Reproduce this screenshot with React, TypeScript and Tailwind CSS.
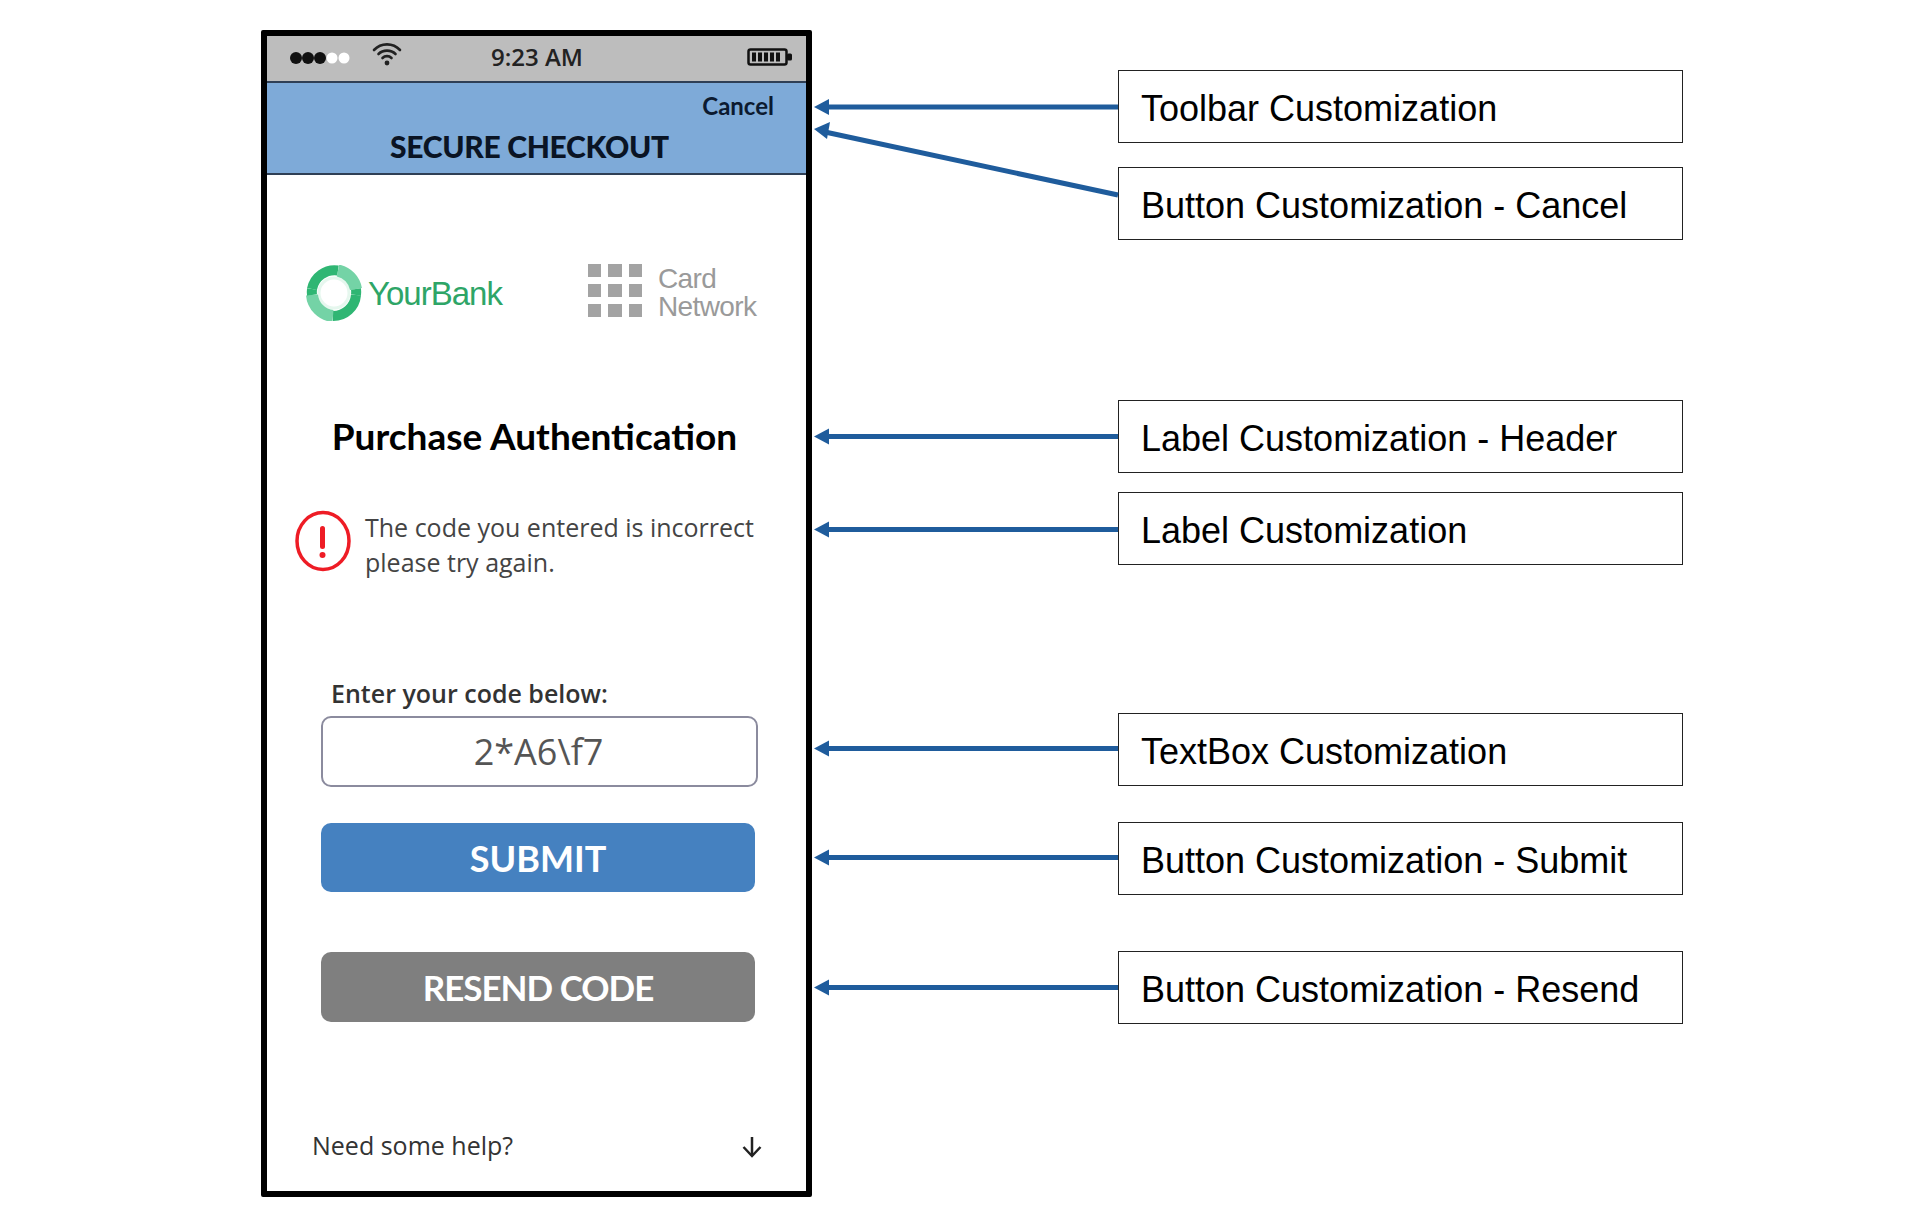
import React from "react";

const ui = "font-['Open_Sans','Noto_Sans',sans-serif]";
const lato = "font-['Lato','Open_Sans',sans-serif]";

function Callout({ label, className }: { label: string; className: string }) {
  return (
    <div className={`flex h-[73px] w-[565px] items-center border border-[#222] pl-[22px] pt-[5px] text-[36px] leading-none text-black font-['Liberation_Sans',sans-serif] ${className}`}>
      {label}
    </div>
  );
}

function Arrows() {
  const ys = [107, 436.5, 529.5, 748.5, 857.5, 987.5];
  return (
    <svg className="absolute left-0 top-0" width="1920" height="1227" fill="#1f5c9c">
      {ys.map((y) => (
        <g key={y}>
          <rect x="822" y={y - 2.5} width="296" height="5" />
          <polygon points={`814,${y} 829,${y - 8} 829,${y + 8}`} />
        </g>
      ))}
      <line x1="1118" y1="195" x2="825" y2="132" stroke="#1f5c9c" strokeWidth="5" />
      <polygon points="814,129 830,122 827,139" />
    </svg>
  );
}

function Signal() {
  return (
    <svg width="62" height="16" viewBox="0 0 62 16">
      {[8, 20, 32].map((x) => <circle key={x} cx={x} cy="8" r="6" fill="#111" />)}
      {[44, 56].map((x) => <circle key={x} cx={x} cy="8" r="5.5" fill="#fff" />)}
    </svg>
  );
}

function Wifi() {
  return (
    <svg width="30" height="26" viewBox="0 0 30 26" fill="none" stroke="#222" strokeWidth="2.6" strokeLinecap="round">
      <path d="M2 9 C9 1.5 21 1.5 28 9" />
      <path d="M6.5 13 C11 8.5 19 8.5 23.5 13" />
      <path d="M10.5 17 C13 14.5 17 14.5 19.5 17" />
      <circle cx="15" cy="22" r="2.4" fill="#222" stroke="none" />
    </svg>
  );
}

function Battery() {
  return (
    <svg width="46" height="18" viewBox="0 0 46 18">
      <rect x="1.5" y="1.5" width="38" height="15" rx="2" fill="none" stroke="#111" strokeWidth="2.5" />
      <rect x="40" y="5.5" width="5" height="7" rx="1.5" fill="#111" />
      {[5, 11, 17, 23, 29].map((x) => <rect key={x} x={x} y="4.5" width="4" height="9" fill="#111" />)}
    </svg>
  );
}

function BankLogo() {
  return (
    <svg width="56" height="56" viewBox="0 0 56 56" fill="none">
      <circle cx="28" cy="28" r="15" stroke="#e6f7ee" strokeWidth="3" />
      <g strokeWidth="10">
        <path d="M6 24 A23 23 0 0 1 32 5.5" stroke="#2fb673" />
        <path d="M32 5.5 A23 23 0 0 1 50 24" stroke="#74d3a6" strokeWidth="12" />
        <path d="M50 30 A23 23 0 0 1 27 51" stroke="#2fb673" />
        <path d="M27 51 A23 23 0 0 1 6 30" stroke="#74d3a6" strokeWidth="12" />
        <path d="M50 24 A23 23 0 0 1 50 30" stroke="#2fb673" />
        <path d="M6 30 A23 23 0 0 1 6 24" stroke="#2fb673" />
      </g>
    </svg>
  );
}

function CardGrid() {
  return (
    <div className="grid w-[54px] grid-cols-3 gap-[7px]">
      {Array.from({ length: 9 }).map((_, i) => (
        <div key={i} className="h-[13px] bg-[#a3a3a3]" />
      ))}
    </div>
  );
}

function ErrorIcon() {
  return (
    <svg width="56" height="62" viewBox="0 0 56 62" fill="none">
      <ellipse cx="28" cy="31" rx="26" ry="28.5" stroke="#ee1c25" strokeWidth="3.5" />
      <rect x="25" y="16" width="5" height="23" rx="2.5" fill="#ee1c25" />
      <circle cx="27.5" cy="45" r="3" fill="#ee1c25" />
    </svg>
  );
}

function Phone() {
  return (
    <div className={`flex h-[1167px] w-[551px] shrink-0 flex-col rounded-[2px] border-[6px] border-black bg-white ${ui}`}>
      <div className="flex h-[47px] shrink-0 items-center border-b-[2px] border-[#2f3f55] bg-[#bdbdbd] pl-[21px] pr-[13px]">
        <div className="-mt-[2px]"><Signal /></div>
        <div className="ml-[22px] -mt-[10px]"><Wifi /></div>
        <div className="ml-[89px] -mt-[4px] text-[24px] font-semibold leading-none text-[#222]">9:23 AM</div>
        <div className="ml-auto -mt-[3px]"><Battery /></div>
      </div>
      <div className="flex h-[92px] shrink-0 flex-col border-b-[2px] border-[#2f3f55] bg-[#7eaad8]">
        <div className={`mt-[8px] self-end pr-[32px] text-[24px] font-bold leading-[30px] text-[#0c1a30] ${lato}`}>Cancel</div>
        <div className={`mt-[7px] pr-[14px] text-center text-[30px] font-black leading-[36px] tracking-[-0.3px] text-[#0a1424] ${lato}`}>SECURE CHECKOUT</div>
      </div>

      <div className="mt-[90px] flex h-[56px] shrink-0 items-center pl-[39px]">
        <BankLogo />
        <div className="ml-[6px] font-['Liberation_Sans',sans-serif] text-[33px] leading-none tracking-[-1px] text-[#2ea567]">YourBank</div>
        <div className="ml-[86px] -mt-[5px]"><CardGrid /></div>
        <div className="ml-[16px] font-['Liberation_Sans',sans-serif] text-[28px] leading-[28px] tracking-[-0.6px] text-[#9a9a9a]">Card<br />Network</div>
      </div>

      <div className={`mt-[91px] pr-[4px] text-center text-[37px] font-bold leading-[48px] text-black ${lato}`}>Purchase Authentication</div>

      <div className="mt-[50px] flex pl-[28px]">
        <ErrorIcon />
        <div className="ml-[14px] text-[25px] leading-[35px] text-[#444]">The code you entered is incorrect<br />please try again.</div>
      </div>

      <div className="ml-[64px] mt-[97px] text-[25px] font-semibold leading-[32px] text-[#333]">Enter your code below:</div>
      <div className="ml-[54px] mt-[7px] flex h-[71px] w-[437px] shrink-0 items-center justify-center rounded-[10px] border-[2.5px] border-[#8b8b9e] pr-[2px] text-[36px] leading-none text-[#555]">2*A6\f7</div>
      <button className={`ml-[54px] mt-[36px] flex h-[69px] w-[434px] shrink-0 items-center justify-center rounded-[10px] bg-[#4581c0] text-[36px] font-bold leading-none text-white ${lato}`}>SUBMIT</button>
      <button className={`ml-[54px] mt-[60px] flex h-[70px] w-[434px] shrink-0 items-center justify-center rounded-[10px] bg-[#7f7f7f] text-[35px] font-bold leading-none tracking-[-1px] text-white ${lato}`}>RESEND CODE</button>

      <div className="mt-auto mb-[30px] flex items-center pl-[45px] pr-[43px]">
        <div className="text-[25px] leading-[32px] text-[#333]">Need some help?</div>
        <svg className="ml-auto mt-[3px]" width="22" height="24" viewBox="0 0 22 24" fill="none" stroke="#222" strokeWidth="2.5">
          <path d="M11 2 V21" />
          <path d="M2.5 12 L11 21 L19.5 12" />
        </svg>
      </div>
    </div>
  );
}

export default function App() {
  return (
    <div className="relative flex h-[1227px] w-[1920px] overflow-hidden bg-white pl-[261px] pt-[30px]">
      <Phone />
      <div className="ml-[306px] flex flex-col pt-[40px]">
        <Callout label="Toolbar Customization" className="" />
        <Callout label="Button Customization - Cancel" className="mt-[24px]" />
        <Callout label="Label Customization - Header" className="mt-[160px]" />
        <Callout label="Label Customization" className="mt-[19px]" />
        <Callout label="TextBox Customization" className="mt-[148px]" />
        <Callout label="Button Customization - Submit" className="mt-[36px]" />
        <Callout label="Button Customization - Resend" className="mt-[56px]" />
      </div>
      <Arrows />
    </div>
  );
}
